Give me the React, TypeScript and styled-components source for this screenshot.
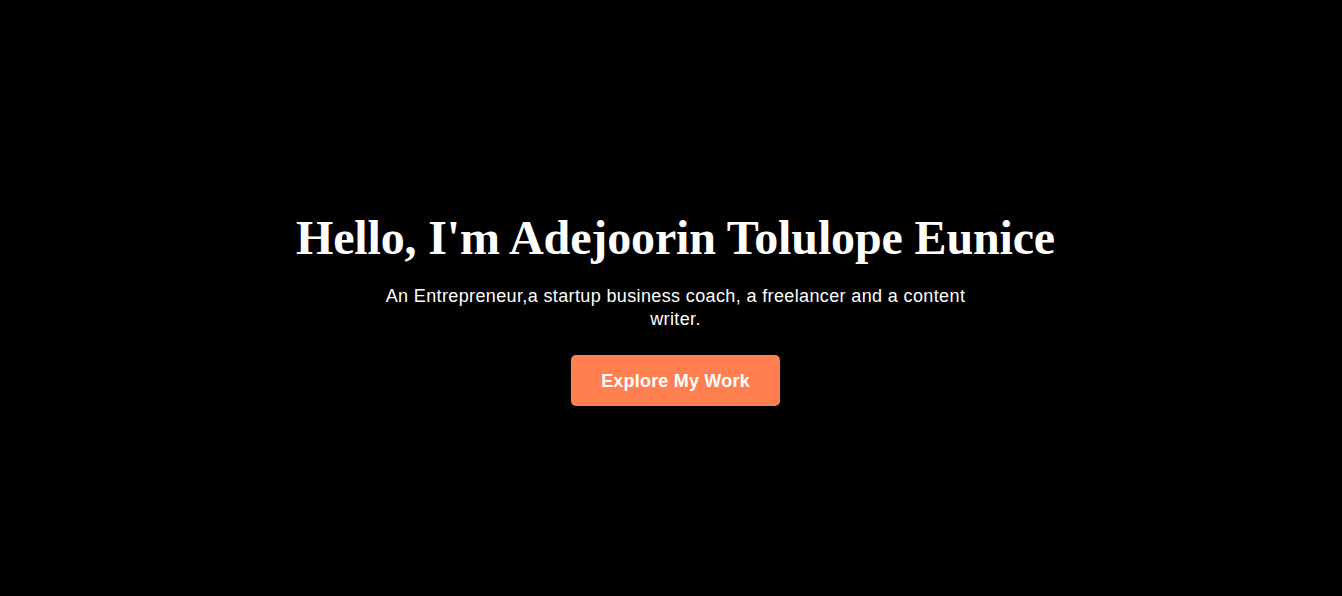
import React from "react";
import styled, { createGlobalStyle } from "styled-components";

const Global = createGlobalStyle`
  html, body { margin: 0; padding: 0; background: #000; }
  body { font-family: "Liberation Sans", Arial, sans-serif; color: #fff; }
`;

const Hero = styled.section`
  box-sizing: border-box;
  height: 596px;
  padding: 20px 0 0 9px;
  display: flex;
  flex-direction: column;
  align-items: center;
  justify-content: center;
  text-align: center;
  background: #000;
  color: #fff;
`;

const Title = styled.h1`
  font-family: "Liberation Serif", "Times New Roman", serif;
  font-weight: 700;
  font-size: 48px;
  letter-spacing: -0.14px;
  margin: 0 0 20px;
`;

const Subtitle = styled.p`
  font-size: 18px;
  line-height: 23px;
  letter-spacing: 0.37px;
  max-width: 600px;
  margin: 0 0 24px;
`;

const Button = styled.a`
  display: inline-block;
  background: #ff7f50;
  color: #fff;
  font-weight: 700;
  font-size: 18px;
  line-height: 21px;
  letter-spacing: 0.2px;
  padding: 16px 30px 14px;
  border-radius: 5px;
  text-decoration: none;
`;

export default function App() {
  return (
    <>
      <Global />
      <Hero>
        <Title>Hello, I'm Adejoorin Tolulope Eunice</Title>
        <Subtitle>
          An Entrepreneur,a startup business coach, a freelancer and a content writer.
        </Subtitle>
        <Button href="#">Explore My Work</Button>
      </Hero>
    </>
  );
}
